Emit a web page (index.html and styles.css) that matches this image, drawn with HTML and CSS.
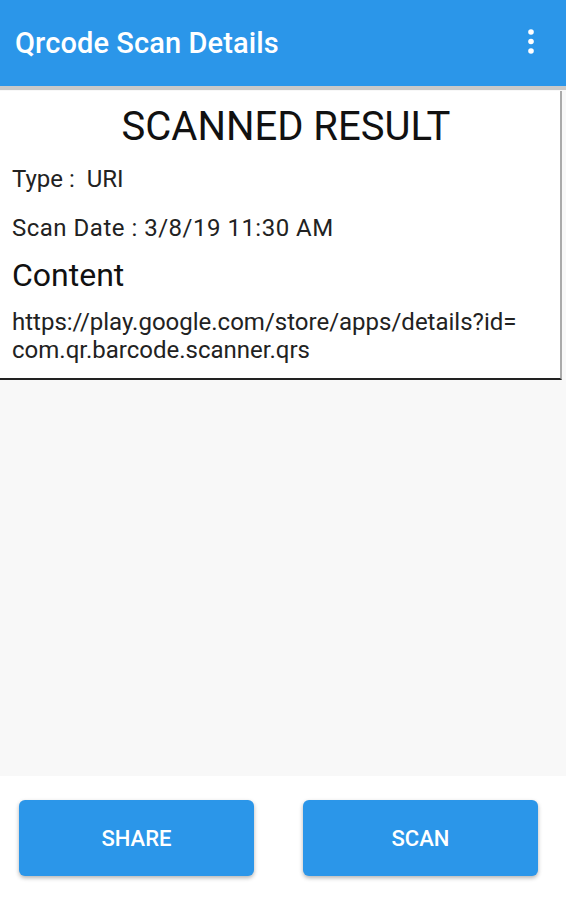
FILE: index.html
```html
<!DOCTYPE html>
<html lang="en">
<head>
    <meta charset="UTF-8">
    <meta name="viewport" content="width=device-width, initial-scale=1.0">
    <title>Qrcode Scan Details</title>
    <link rel="stylesheet" href="styles.css">
</head>
<body>
    <div id="app">
        <header class="toolbar">
            <h1 class="toolbar-title">Qrcode Scan Details</h1>
            <button class="menu-btn" aria-label="More options">
                <svg width="8" height="26" viewBox="0 0 8 26">
                    <circle cx="4" cy="3" r="2.8" fill="#fff"/>
                    <circle cx="4" cy="12.5" r="2.8" fill="#fff"/>
                    <circle cx="4" cy="22" r="2.8" fill="#fff"/>
                </svg>
            </button>
        </header>
        <main class="content">
            <div class="result-card">
                <h2 class="result-title">SCANNED RESULT</h2>
                <p class="row">Type :&nbsp; URI</p>
                <p class="row date">Scan Date : 3/8/19 11:30 AM</p>
                <h3 class="content-label">Content</h3>
                <p class="url">https://play.google.com/store/apps/details?id=<br>com.qr.barcode.scanner.qrs</p>
            </div>
        </main>
        <footer class="actions">
            <button class="action-btn">SHARE</button>
            <button class="action-btn">SCAN</button>
        </footer>
    </div>
</body>
</html>
```

FILE: styles.css
```css
html, body {
    margin: 0;
    padding: 0;
}

body {
    font-family: Roboto, "Noto Sans", Arial, sans-serif;
    background: #f8f8f8;
    color: #111;
}

#app {
    width: 566px;
    height: 900px;
    display: flex;
    flex-direction: column;
}

.toolbar {
    height: 86px;
    background: #2b96e9;
    display: flex;
    align-items: center;
    justify-content: space-between;
    padding: 0 0 0 15px;
    border-bottom: 4px solid #c9c9c9;
    box-sizing: content-box;
    flex-shrink: 0;
}

.toolbar-title {
    margin: 0;
    color: #fff;
    font-size: 29px;
    font-weight: 500;
    letter-spacing: 0.1px;
}

.menu-btn {
    background: none;
    border: none;
    padding: 0;
    width: 70px;
    display: flex;
    justify-content: center;
    margin-top: -2px;
}

.content {
    flex: 1;
    padding-top: 1px;
}

.result-card {
    width: 562px;
    background: #fff;
    border-right: 2px solid #aaa;
    border-bottom: 2px solid #222;
    padding: 10px 0 14px 12px;
    box-sizing: border-box;
}

.result-title {
    margin: 0 0 11px 0;
    text-align: center;
    font-size: 40px;
    font-weight: 400;
    color: #111;
    line-height: 52px;
}

.row {
    margin: 0 0 19px 0;
    font-size: 24px;
    line-height: 30px;
    color: #222;
}

.row.date {
    margin-bottom: 14px;
    letter-spacing: 0.5px;
}

.content-label {
    margin: 0 0 15px 0;
    font-size: 32px;
    font-weight: 400;
    line-height: 36px;
    color: #111;
}

.url {
    margin: 0;
    font-size: 24px;
    line-height: 28px;
    color: #222;
}

.actions {
    height: 124px;
    background: #fff;
    display: flex;
    justify-content: space-between;
    align-items: flex-start;
    padding: 24px 28px 0 19px;
    box-sizing: border-box;
    flex-shrink: 0;
}

.action-btn {
    width: 235px;
    height: 76px;
    background: #2b96e9;
    color: #fff;
    border: none;
    border-radius: 6px;
    font-family: Roboto, Arial, sans-serif;
    font-size: 22px;
    font-weight: 500;
    box-shadow: 0 2px 4px rgba(0, 0, 0, 0.3);
}
```
